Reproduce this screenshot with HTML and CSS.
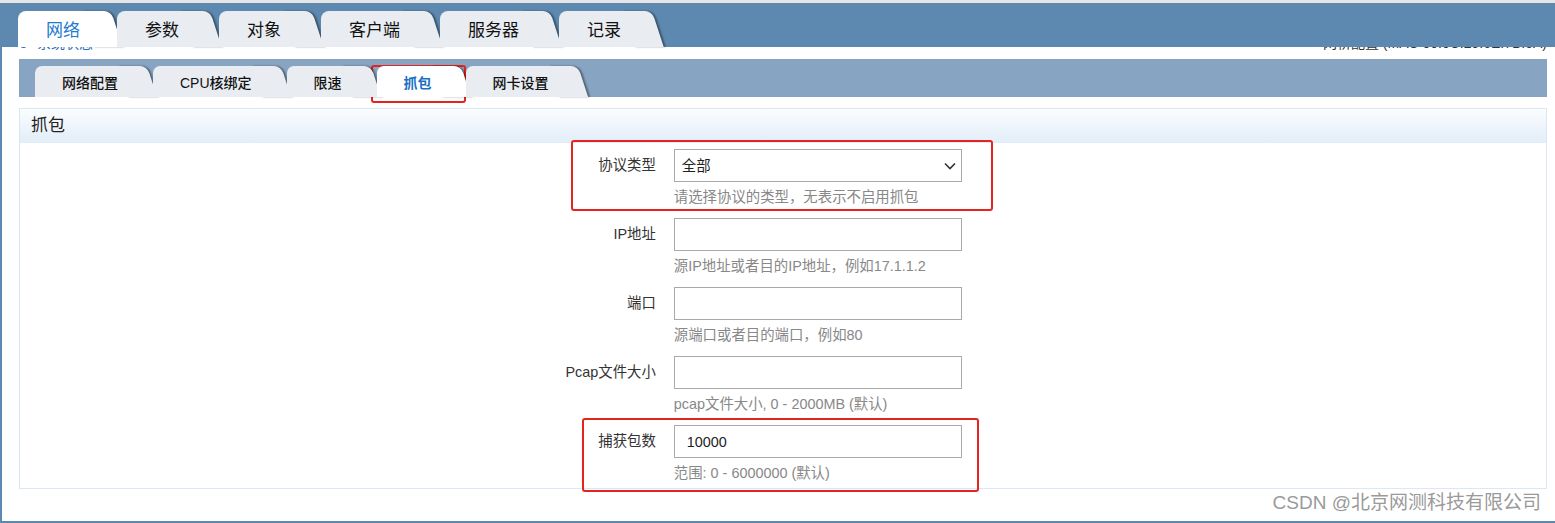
FILE: index.html
```html
<!doctype html>
<html lang="zh-CN">
<head>
  <meta charset="UTF-8">
  <meta name="viewport" content="width=device-width, initial-scale=1.0">
  <title>抓包</title>
  <link rel="stylesheet" href="styles.css">
</head>
<body>
  <div class="topline"></div>
  <div class="page">
    <div class="tabbar">
      <a class="tab active">网络</a>
      <a class="tab">参数</a>
      <a class="tab">对象</a>
      <a class="tab">客户端</a>
      <a class="tab">服务器</a>
      <a class="tab">记录</a>
    </div>

    <div class="content">
      <div class="status">
        <div class="status-line">
          <span class="status-left"><i class="dot"></i>系统状态</span>
          <span class="status-right">网桥配置 (MAC 00:0C:29:6E:7B:5A)</span>
        </div>
      </div>

      <div class="subbar">
        <a class="subtab">网络配置</a>
        <a class="subtab">CPU核绑定</a>
        <a class="subtab">限速</a>
        <a class="subtab active">抓包</a>
        <a class="subtab">网卡设置</a>
      </div>

      <div class="panel">
        <div class="panel-head">抓包</div>
        <form class="form">
          <div class="row">
            <label for="proto">协议类型</label>
            <div class="field">
              <div class="select-wrap">
                <select id="proto" class="select">
                  <option>全部</option>
                  <option>TCP</option>
                  <option>UDP</option>
                  <option>ICMP</option>
                </select>
                <svg class="chevron" width="12" height="8" viewBox="0 0 12 8">
                  <polyline points="1,1.5 6,6.5 11,1.5" fill="none" stroke="#333" stroke-width="1.6"/>
                </svg>
              </div>
              <div class="hint">请选择协议的类型，无表示不启用抓包</div>
            </div>
          </div>

          <div class="row">
            <label for="ip">IP地址</label>
            <div class="field">
              <input type="text" id="ip" class="input">
              <div class="hint">源IP地址或者目的IP地址，例如17.1.1.2</div>
            </div>
          </div>

          <div class="row">
            <label for="port">端口</label>
            <div class="field">
              <input type="text" id="port" class="input">
              <div class="hint">源端口或者目的端口，例如80</div>
            </div>
          </div>

          <div class="row">
            <label for="pcapSize">Pcap文件大小</label>
            <div class="field">
              <input type="text" id="pcapSize" class="input">
              <div class="hint">pcap文件大小, 0 - 2000MB (默认)</div>
            </div>
          </div>

          <div class="row">
            <label for="count">捕获包数</label>
            <div class="field">
              <input type="text" id="count" class="input" value="10000">
              <div class="hint">范围: 0 - 6000000 (默认)</div>
            </div>
          </div>
        </form>
      </div>

      <div class="watermark">CSDN @北京网测科技有限公司</div>
    </div>
  </div>

  <!-- red annotation boxes from the screenshot -->
  <div class="mark mark-tab"></div>
  <div class="mark mark-proto"></div>
  <div class="mark mark-count"></div>
</body>
</html>
```

FILE: styles.css
```css
body {
  margin: 0;
  background: #fff;
  font-family: 'Liberation Sans', 'Noto Sans CJK SC', sans-serif;
  color: #333;
  overflow: hidden;
}

.topline {
  height: 3px;
  background: #e6e6e6;
}

.page {
  height: 520px;
  box-sizing: border-box;
  border-left: 2px solid #5d88b0;
  border-bottom: 2px solid #5d88b0;
}

/* main tabs */
.tabbar {
  height: 44px;
  margin-left: -2px;
  padding-left: 18px;
  background: #5d89b0;
  display: flex;
  align-items: flex-end;
}

.tab,
.subtab {
  position: relative;
  z-index: 1;
  background: #e9edf2;
  color: #111;
  text-align: center;
  white-space: nowrap;
  cursor: pointer;
}

.tab::after,
.subtab::after {
  content: '';
  position: absolute;
  top: 0;
  bottom: 0;
  right: -7px;
  width: 30px;
  z-index: -1;
  background: inherit;
  border-radius: 0 7px 0 0;
  transform: skewX(18deg);
  transform-origin: top left;
  box-shadow: 2px 0 2px rgba(0, 0, 0, 0.4);
}

.tab {
  height: 36px;
  padding: 0 24px 0 28px;
  margin-right: 16px;
  border-radius: 8px 0 0 0;
  font-size: 17px;
  line-height: 40px;
}

.tab.active {
  background: #fff;
  color: #1f7bcf;
  margin-right: 13px;
}

.content {
  padding: 0 8px 0 17px;
}

/* half hidden status line under the tab bar */
.status {
  height: 12px;
  overflow: hidden;
}

.status-line {
  margin-top: -12px;
  display: flex;
  justify-content: space-between;
  font-size: 14px;
  line-height: 16px;
}

.status-left {
  color: #2b6cb0;
}

.dot {
  display: inline-block;
  width: 7px;
  height: 7px;
  margin: 0 10px 0 1px;
  border-radius: 50%;
  background: #2b6cb0;
}

.status-right {
  color: #333;
}

/* sub tabs */
.subbar {
  height: 38px;
  padding-left: 16px;
  background: #87a4c2;
  display: flex;
  align-items: flex-end;
}

.subtab {
  height: 31px;
  padding: 0 22px 0 27px;
  margin-right: 13px;
  border-radius: 7px 0 0 0;
  font-size: 14px;
  font-weight: 500;
  line-height: 35px;
}

.subtab.active {
  background: #fff;
  color: #1a6fc4;
  font-weight: bold;
  margin-right: 12px;
}

/* panel */
.panel {
  margin-top: 11px;
  border: 1px solid #dbe7f2;
}

.panel-head {
  height: 34px;
  padding-left: 11px;
  background: linear-gradient(#fbfdfe, #e1edf8);
  color: #222;
  font-size: 17px;
  line-height: 34px;
}

.form {
  margin: 0;
  padding: 6px 0;
}

.row {
  display: grid;
  grid-template-columns: 5fr 7fr;
  margin-bottom: 12px;
  font-size: 14.4px;
}

.row:last-child {
  margin-bottom: 0;
}

.row label {
  text-align: right;
  line-height: 33px;
  color: #333;
}

.field {
  padding-left: 18px;
}

.input,
.select {
  display: block;
  width: 288px;
  height: 33px;
  box-sizing: border-box;
  margin: 0;
  border: 1px solid #aaa;
  border-radius: 0;
  background: #fff;
  color: #222;
  font-family: inherit;
  font-size: 14.4px;
  outline: none;
}

.input {
  padding: 0 12px;
}

.select-wrap {
  position: relative;
  width: 288px;
}

.select {
  padding: 0 7px;
  appearance: none;
  -webkit-appearance: none;
}

.chevron {
  position: absolute;
  right: 6px;
  top: 13px;
  pointer-events: none;
}

.hint {
  margin-top: 6px;
  line-height: 18px;
  color: #888;
}

.watermark {
  margin-top: 4px;
  padding-right: 6px;
  text-align: right;
  color: #9a9a9a;
  font-size: 19px;
  line-height: 20px;
}

/* annotations */
.mark {
  position: absolute;
  box-sizing: border-box;
  border: 2px solid #e5231f;
  border-radius: 3px;
  pointer-events: none;
}

.mark-tab {
  left: 371px;
  top: 65px;
  width: 95px;
  height: 38px;
}

.mark-proto {
  left: 571px;
  top: 140px;
  width: 422px;
  height: 71px;
}

.mark-count {
  left: 582px;
  top: 418px;
  width: 397px;
  height: 74px;
}
```
